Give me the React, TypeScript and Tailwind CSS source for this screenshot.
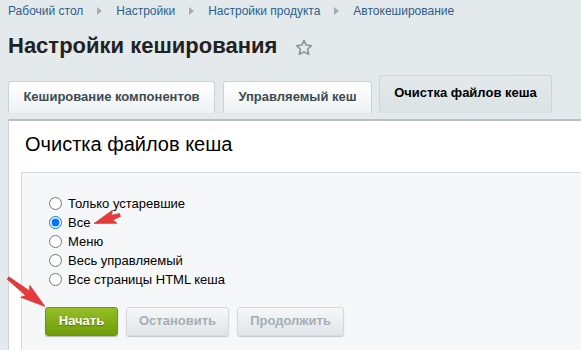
import React from "react";

const crumbs = ["Рабочий стол", "Настройки", "Настройки продукта", "Автокеширование"];

const options = [
  { label: "Только устаревшие", checked: false },
  { label: "Все", checked: true },
  { label: "Меню", checked: false },
  { label: "Весь управляемый", checked: false },
  { label: "Все страницы HTML кеша", checked: false },
];

// tail -> tip arrow shape, like a screenshot annotation
function arrowPoints(x1: number, y1: number, x2: number, y2: number, head: number, wing: number, tailW: number, neckW: number) {
  const dx = x2 - x1;
  const dy = y2 - y1;
  const len = Math.hypot(dx, dy);
  const ux = dx / len;
  const uy = dy / len;
  const nx = -uy;
  const ny = ux;
  const bx = x2 - ux * head;
  const by = y2 - uy * head;
  const wx = x2 - ux * (head + 3);
  const wy = y2 - uy * (head + 3);
  const pts = [
    [x1 + (nx * tailW) / 2, y1 + (ny * tailW) / 2],
    [bx + (nx * neckW) / 2, by + (ny * neckW) / 2],
    [wx + (nx * wing) / 2, wy + (ny * wing) / 2],
    [x2, y2],
    [wx - (nx * wing) / 2, wy - (ny * wing) / 2],
    [bx - (nx * neckW) / 2, by - (ny * neckW) / 2],
    [x1 - (nx * tailW) / 2, y1 - (ny * tailW) / 2],
  ];
  return pts.map((p) => p.map((v) => v.toFixed(1)).join(",")).join(" ");
}

function Star() {
  return (
    <svg width="18" height="17" viewBox="0 0 24 23" fill="none" stroke="#87939a" strokeWidth="2.2" strokeLinejoin="round">
      <path d="M12 1.8l3 6.4 7 .9-5.1 4.8 1.3 6.9L12 17.4l-6.2 3.4 1.3-6.9L2 9.1l7-.9z" />
    </svg>
  );
}

export default function App() {
  return (
    <div className="relative w-[581px] h-[350px] overflow-hidden bg-[#e4eaec] font-['Liberation_Sans',Arial,sans-serif]">
      <div className="flex items-center pl-2 pt-[4px] h-[18px] text-[12px] leading-[14px] text-[#2d5d8c]">
        {crumbs.map((c, i) => (
          <React.Fragment key={c}>
            {i > 0 && (
              <span className="mx-[14px] w-0 h-0 border-y-[4px] border-y-transparent border-l-[5px] border-l-[#a3adb3]" />
            )}
            <span>{c}</span>
          </React.Fragment>
        ))}
      </div>

      <div className="flex items-center pl-2 mt-[15px] h-[26px]">
        <h1 className="text-[22px] leading-[26px] font-bold text-[#222]">Настройки кеширования</h1>
        <span className="ml-[18px] mt-[2px]">
          <Star />
        </span>
      </div>

      <div className="flex items-end pl-2 mt-[16px] text-[13px] font-bold">
        <div className="w-[207px] h-[32px] flex items-center justify-center pb-[1px] rounded-t-[3px] border border-b-0 border-[#cbd2d5] bg-gradient-to-b from-[#ffffff] to-[#eef2f3] text-[#3e4a52]">
          Кеширование компонентов
        </div>
        <div className="ml-2 w-[149px] h-[32px] flex items-center justify-center pb-[1px] rounded-t-[3px] border border-b-0 border-[#cbd2d5] bg-gradient-to-b from-[#ffffff] to-[#eef2f3] text-[#3e4a52]">
          Управляемый кеш
        </div>
        <div className="ml-[7px] w-[173px] h-[38px] flex items-center justify-center pb-[4px] rounded-t-[3px] border border-b-0 border-[#cdd4d7] bg-gradient-to-b from-[#e4eaec] to-[#dae2e4] text-black">
          Очистка файлов кеша
        </div>
      </div>

      <div className="ml-2 mt-[6px] border-t-2 border-l border-t-[#b7bfc2] border-l-[#cdd3d6] bg-white h-[240px] flex flex-col">
        <h2 className="pl-4 pt-[11px] text-[20px] leading-[24px] text-black">Очистка файлов кеша</h2>
        <div className="ml-3 mt-[16px] flex-1 border-t border-l border-[#d3d9dc] bg-[#f5f7f8] pt-[21px]">
          <div className="pl-[27px] flex flex-col">
            {options.map((o) => (
              <label key={o.label} className="h-[19px] flex items-center text-[13px] text-black">
                <input
                  type="radio"
                  name="clear"
                  defaultChecked={o.checked}
                  className="m-0 w-[13px] h-[13px] accent-[#0075ff]"
                />
                <span className="ml-[6px]">{o.label}</span>
              </label>
            ))}
          </div>
          <div className="pl-[23px] mt-[18px] flex gap-2 text-[13px] font-bold">
            <button className="w-[73px] h-[29px] pb-[2px] rounded-[3px] border border-[#6f9412] bg-gradient-to-b from-[#95bf25] to-[#6f9c08] text-white [text-shadow:0_1px_1px_rgba(0,0,0,0.35)] shadow-[0_1px_1px_rgba(0,0,0,0.25)]">
              Начать
            </button>
            <button className="w-[103px] h-[29px] pb-[2px] rounded-[3px] border border-[#d3d9dc] bg-gradient-to-b from-[#f6f8f9] to-[#dfe5e8] text-[#a6aeb3] shadow-[0_1px_1px_rgba(0,0,0,0.2)]">
              Остановить
            </button>
            <button className="w-[107px] h-[29px] pb-[2px] rounded-[3px] border border-[#d3d9dc] bg-gradient-to-b from-[#f6f8f9] to-[#dfe5e8] text-[#a6aeb3] shadow-[0_1px_1px_rgba(0,0,0,0.2)]">
              Продолжить
            </button>
          </div>
        </div>
      </div>

      <svg className="absolute left-0 top-0 pointer-events-none" width="581" height="350">
        <polygon points={arrowPoints(120, 215, 94, 223.5, 19, 14, 3, 5)} fill="#e53a3c" stroke="#c92a2c" strokeWidth="0.6" strokeLinejoin="round" />
        <polygon points={arrowPoints(8, 278, 45, 306.5, 22, 15, 3, 6)} fill="#e53a3c" stroke="#c92a2c" strokeWidth="0.6" strokeLinejoin="round" />
      </svg>
    </div>
  );
}
